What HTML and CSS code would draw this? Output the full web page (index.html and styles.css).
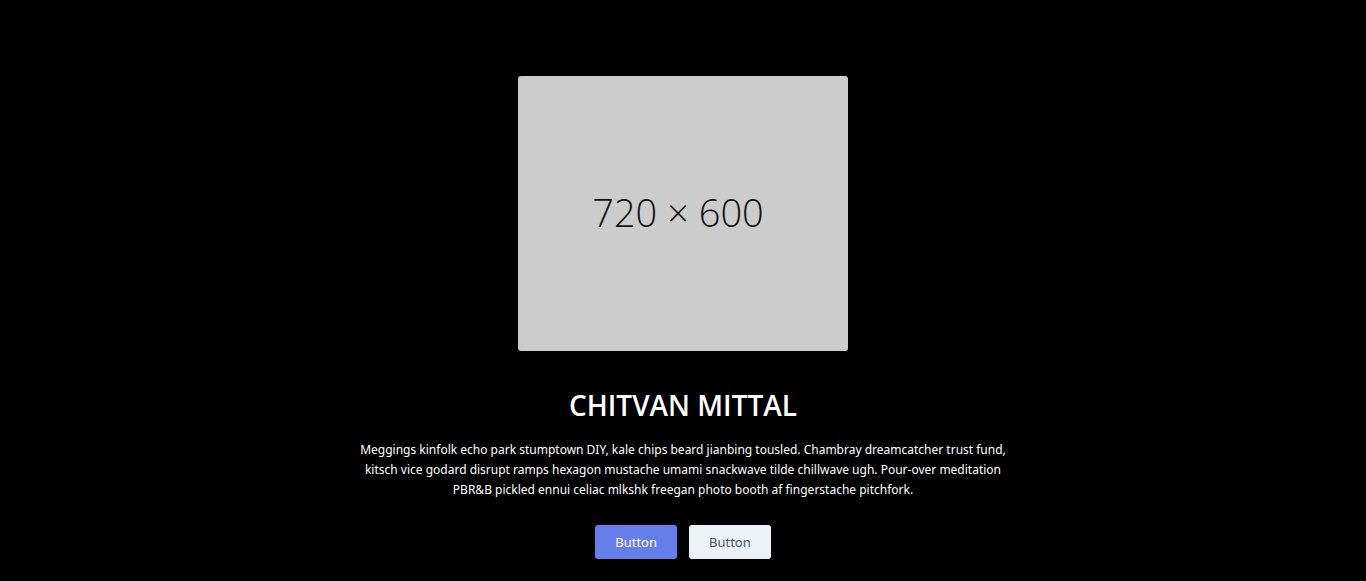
FILE: index.html
```html
<!DOCTYPE html>
<html lang="en">
<head>
<meta charset="utf-8">
<meta name="viewport" content="width=device-width, initial-scale=1">
<title>Chitvan Mittal</title>
<link rel="stylesheet" href="styles.css">
</head>
<body>
<main class="hero">
  <div class="hero-image" role="img" aria-label="hero"><span class="hero-image-label">720 × 600</span></div>
  <section class="hero-content">
    <h1 class="hero-title">CHITVAN MITTAL</h1>
    <p class="hero-text">Meggings kinfolk echo park stumptown DIY, kale chips beard jianbing tousled. Chambray dreamcatcher trust fund, kitsch vice godard disrupt ramps hexagon mustache umami snackwave tilde chillwave ugh. Pour-over meditation PBR&amp;B pickled ennui celiac mlkshk freegan photo booth af fingerstache pitchfork.</p>
    <div class="hero-actions">
      <button class="button button-primary" type="button">Button</button>
      <button class="button button-secondary" type="button">Button</button>
    </div>
  </section>
</main>
</body>
</html>
```

FILE: styles.css
```css
* {
  box-sizing: border-box;
}

body {
  margin: 0;
  background: #000;
  color: #fff;
  font-family: "Segoe UI", "Noto Sans", "Open Sans", sans-serif;
}

.hero {
  display: flex;
  flex-direction: column;
  align-items: center;
  padding: 76px 20px 22px;
}

.hero-image {
  display: flex;
  align-items: center;
  justify-content: center;
  width: 100%;
  max-width: 330px;
  aspect-ratio: 6 / 5;
  margin-bottom: 36px;
  padding: 0 10px 4px 0;
  border-radius: 3px;
  background: #ccc;
  color: #111;
}

.hero-image-label {
  font-family: "Open Sans", sans-serif;
  font-size: 38px;
  font-weight: 300;
}

.hero-content {
  width: 100%;
  max-width: 660px;
  text-align: center;
}

.hero-title {
  margin: 0 0 17px;
  font-family: "Segoe UI", "Open Sans", sans-serif;
  font-size: 28px;
  font-weight: 600;
  line-height: 36px;
}

.hero-text {
  margin: 0 0 25px;
  font-size: 12px;
  line-height: 20px;
}

.hero-actions {
  display: flex;
  justify-content: center;
  gap: 12px;
}

.button {
  padding: 6px 20px;
  border: 0;
  border-radius: 3px;
  font-family: inherit;
  font-size: 13px;
  line-height: 22px;
}

.button-primary {
  background: #667eea;
  color: #fff;
}

.button-secondary {
  background: #edf2f7;
  color: #4a5568;
}
```
